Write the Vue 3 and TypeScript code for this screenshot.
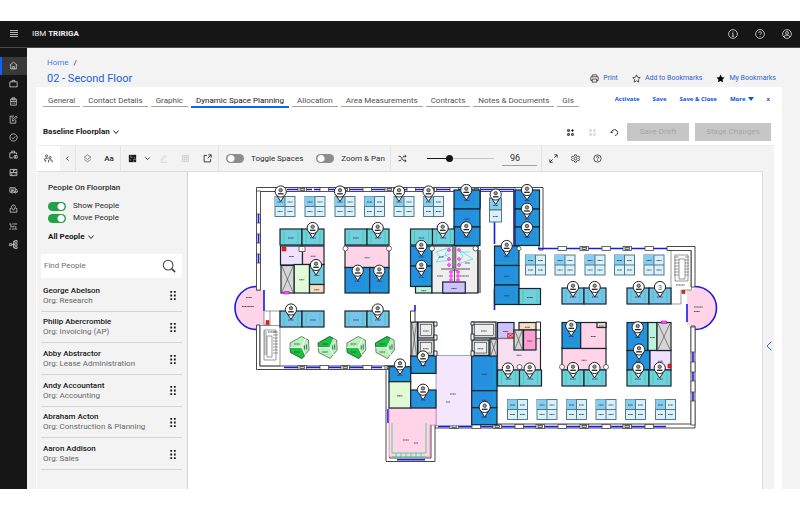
<script setup lang="ts">
import { ref } from 'vue'

interface NavItem { name: string; d: string }
interface Person { name: string; org: string }
interface Room { k: string; x: number; y: number; w: number; h: number }

const navItems: NavItem[] = [
  { name: 'Home', d: 'M1.5 7.5 8 2l6.5 5.5M3 6.5V14h10V6.5M6.5 14v-4h3v4' },
  { name: 'Portfolio', d: 'M1.5 5h13v9h-13zM5.5 5V2.5h5V5' },
  { name: 'Projects', d: 'M3 3.5h10V14.500H3zM5.5 1.5h5v3.5h-5zM3 8h10M5.5 11h1M8 11h2.5' },
  { name: 'Contracts', d: 'M9 2H2v12.5h10V9M6 10.5l.5-2.5 6-6 2 2-6 6zM4.5 5H7' },
  { name: 'Approvals', d: 'M8 1.5a6.5 6.5 0 1 0 .01 0M5 8l2.2 2.2L11.2 6' },
  { name: 'Facilities', d: 'M7 14H1.5V5h12v3M5 5V2h5v3M9 10h5.5v4.5H9zM11.5 10v4' },
  { name: 'Spaces', d: 'M2 2.5h12v11H2zM2 8h12M8 2.5V8M5 8v5.5M10 10.5h3M11.5 2.5l-2 3' },
  { name: 'Assets', d: 'M4 11H1.5V3h9.5v8H7M11 5.5h2l1.800 3V11H13M4 11a1.5 1.5 0 1 0 3 0 1.5 1.5 0 0 0-3 0M10 11a1.5 1.5 0 1 0 3 0 1.5 1.5 0 0 0-3 0M3.5 5.5H9M3.5 8H9' },
  { name: 'Locations', d: 'M8 11 5 7a3.5 3.5 0 1 1 6 0zM8 4.5v1M4 8H2v6.5h12V8h-2' },
  { name: 'Schedules', d: 'M2 2v3.5h3M6 3.5h8.5M2 8.5h7v-2M12 7v4M2 14V11M5 12.5h9.5' },
  { name: 'Hierarchy', d: 'M1 6.5h4v3.5H1zM5 8h3M8 2.5v11M8 2.5h2M8 13.5h2M8 8h2M10 1h4.5v3H10zM10 6.5h4.5v3H10zM10 12h4.5v3H10z' },
]

const tabs = ['General', 'Contact Details', 'Graphic', 'Dynamic Space Planning', 'Allocation', 'Area Measurements', 'Contracts', 'Notes & Documents', 'Gis']
const activeTab = ref('Dynamic Space Planning')

const people: Person[] = [
  { name: 'George Abelson', org: 'Research' },
  { name: 'Philip Abercrombie', org: 'Invoicing (AP)' },
  { name: 'Abby Abstractor', org: 'Lease Administration' },
  { name: 'Andy Accountant', org: 'Accounting' },
  { name: 'Abraham Acton', org: 'Construction & Planning' },
  { name: 'Aaron Addison', org: 'Sales' },
]

const showPeople = ref(true)
const movePeople = ref(true)
const toggleSpaces = ref(false)
const zoomPan = ref(false)
const search = ref('')
const zoomLevel = ref(31)
const zoomText = ref('96')

const r = (k: string, x: number, y: number, w: number, h: number): Room => ({ k, x, y, w, h })

// Offices that come in side-by-side pairs, 22 units each
const officePairs: [number, number, string][] = [
  [280, 229, 'cyan'], [345, 229, 'cyan'], [410.5, 229, 'cyan'], [280, 311, 'sky'], [345, 311, 'sky'],
  [562, 288, 'sky'], [627, 288, 'sky'], [562, 370, 'cyan'], [627, 370, 'cyan'], [497.5, 370, 'cyan'],
]
const offices: Room[] = officePairs.flatMap(([x, y, k]) => [r(k, x, y, 22, 16), r(k, x + 22, y, 22, 16)])
offices.push(r('cyan', 519, 288.5, 21.5, 16))

const rooms: Room[] = [
  r('lav', 280.5, 246, 22, 19), r('pink', 302.5, 246, 21.5, 18.5),
  r('lime', 294, 264.5, 15.5, 28.5), r('cyan', 309.5, 264.5, 14.5, 20), r('tan', 309.5, 284.5, 14.5, 8.5),
  r('pink', 345, 246, 44, 21.5), r('blue', 345, 267.5, 24.7, 25.5), r('blue', 369.7, 267.5, 19.3, 25.5),
  r('blue', 454, 190, 26, 19), r('blue', 454, 209, 26, 18), r('blue', 454, 227, 26, 18.5),
  r('blue', 410.5, 246, 21.5, 20), r('blue', 410.5, 266, 21.5, 20.5), r('mint', 415.5, 286.5, 16.5, 6.5),
  r('grey', 432, 246, 46, 47), r('violet', 442.7, 282, 22.6, 11),
  r('blue', 515, 190, 24.5, 19), r('blue', 515, 209, 24.5, 18), r('blue', 515, 227, 24.5, 18.5),
  r('blue', 494.5, 246, 24.5, 19.5), r('blue', 494.5, 265.5, 24.5, 19.5), r('blue', 494.5, 285, 24.5, 19.5),
  r('blue', 562, 322.5, 18.7, 26), r('pink', 580.7, 322.5, 25.3, 26), r('tan', 597, 322.5, 9, 5),
  r('blue', 627, 322.5, 21, 28), r('mint', 648, 322.5, 9, 28),
  r('pink', 562, 348.5, 44, 21.5), r('blue', 627, 350.5, 23, 19.5), r('lav', 650, 350.5, 21, 19.5),
  r('violet', 497.5, 322.5, 16.5, 16), r('lilac', 497.5, 338.5, 43, 31.5),
  r('tan', 519, 322.5, 17, 7.5), r('rose', 523.5, 330, 12.5, 20),
  r('blue', 410.7, 355.7, 25.3, 17.7), r('blue', 389, 366.7, 21.7, 15),
  r('lime', 389, 381.7, 21.7, 26.3), r('blue', 410.7, 390, 25.3, 18),
  r('blue', 471.7, 355.7, 25.3, 35), r('blue', 471.7, 390.7, 25.3, 17), r('blue', 471.7, 407.7, 25.3, 17),
]

// Elevators and service shafts, drawn with a crossing
const shafts: Room[] = [
  r('shaft', 281, 265.5, 13, 27.5), r('shaft', 657, 322.5, 14, 28), r('shaft', 411, 322, 6.5, 34),
  r('shaft', 490, 339, 7.3, 17), r('shaft', 514, 330, 9, 20),
]
const lifts: Room[] = [
  r('shaft', 418, 322, 16, 16), r('shaft', 418, 340, 16, 15.5),
  r('shaft', 472, 322, 24, 16), r('shaft', 472, 340, 17, 15.5),
]

const desks: [number, number][] = [
  ...[275, 305, 335, 364.5, 394, 423.5].map((x): [number, number] => [x, 196.5]),
  ...[525.5, 555, 585, 614.5, 644].map((x): [number, number] => [x, 255]),
  ...[507.5, 537, 566.5, 596, 625.5, 655.5].map((x): [number, number] => [x, 399.5]),
]

const pins: [number, number][] = [
  [280.7, 191.5], [340, 191.5], [399, 191.5], [428.5, 191.5], [466.3, 190], [495.7, 194.5], [527, 190],
  [527, 208.7], [527, 227.3], [466.3, 227.3], [312.7, 228], [377.7, 228], [442.7, 228],
  [421.3, 246], [421.3, 266], [506.7, 246], [316, 265], [357.7, 270.7], [379.3, 270.7],
  [291, 309.5], [377.7, 309.5], [573, 287], [594.7, 287], [638.7, 287], [571.3, 326], [637.7, 327.3],
  [639, 349.5], [573, 368], [594.5, 368], [638.3, 368], [659.7, 368], [423, 356.5], [400, 364.5],
  [423, 389.7], [484.7, 407], [508, 368.5], [529.7, 368.5],
]

const pods: { x: number; up: boolean }[] = [
  { x: 299.5, up: false }, { x: 327.7, up: true }, { x: 356.3, up: false }, { x: 385, up: true },
]

const windowsH: [number, number][] = [
  ...[298, 320, 341, 363, 385, 407, 428, 450, 472, 515].map((x): [number, number] => [x, 187.5]),
  ...[298, 320, 341, 363, 385].map((x): [number, number] => [x, 365.5]),
  ...[558, 580, 602, 623, 645].map((x): [number, number] => [x, 246.5]),
  ...[450, 472, 493, 515, 536, 558, 580, 602, 623, 645].map((x): [number, number] => [x, 424.5]),
]
const windowsV: [number, number, number][] = [
  [256.5, 191, 23], [256.5, 223, 11], [256.5, 243, 11], [256.5, 263, 27],
  [691, 327, 25], [691, 362, 10], [691, 381, 11], [691, 401, 24],
]
</script>

<template>
  <div class="app">
    <header class="topbar">
      <button class="menu" aria-label="Open menu">
        <svg width="10" height="10" viewBox="0 0 10 10"><path d="M1 1.500h8M1 3.500h8M1 5.500h8M1 7.500h8" stroke="#b5b5b5" /></svg>
      </button>
      <p class="brand">IBM <b>TRIRIGA</b></p>
      <div class="top-actions">
        <button aria-label="Information">
          <svg class="line" viewBox="0 0 16 16"><circle cx="8" cy="8" r="7" /><path d="M6.5 7H8v4.5M6 11.5h4M8 4v1.5" /></svg>
        </button>
        <button aria-label="Help">
          <svg class="line" viewBox="0 0 16 16"><circle cx="8" cy="8" r="7" /><path d="M5.8 6.2a2.2 2 0 1 1 3 1.9q-.8.3-.8 1.4M8 11v1.3" /></svg>
        </button>
        <button aria-label="Account">
          <svg class="line" viewBox="0 0 16 16"><circle cx="8" cy="8" r="7" /><circle cx="8" cy="6.3" r="2.3" /><path d="M4 13v-1.5Q4 10 6 10h4q2 0 2 1.5V13" /></svg>
        </button>
      </div>
    </header>

    <div class="shell">
      <nav class="rail" aria-label="Main">
        <ul>
          <li v-for="(item, i) in navItems" :key="item.name" :class="{ on: i === 0 }">
            <a href="#" :aria-label="item.name"><svg class="line" viewBox="0 0 16 16"><path :d="item.d" /></svg></a>
          </li>
        </ul>
      </nav>

      <main class="main">
        <div class="heading">
          <div>
            <p class="crumbs"><a href="#">Home</a><span>/</span></p>
            <h1>02 - Second Floor</h1>
          </div>
          <div class="links">
            <a href="#"><svg class="line dark" viewBox="0 0 16 16"><path d="M4 5V1.5h8V5M4 11.5H1.5V5h13v6.5H12M4 9h8v5.5H4z" /></svg>Print</a>
            <a href="#"><svg class="line dark" viewBox="0 0 16 16"><path d="m8 1.5 2 4.3 4.7.6-3.4 3.3.8 4.7L8 12.1l-4.1 2.3.8-4.7L1.3 6.4 6 5.8z" /></svg>Add to Bookmarks</a>
            <a href="#"><svg viewBox="0 0 16 16"><path d="m8 1 2.200 4.600 5 .7-3.600 3.500.9 5L8 12.400l-4.500 2.400.9-5L.8 6.300l5-.7z" /></svg>My Bookmarks</a>
          </div>
        </div>

        <section class="card">
          <div class="tabrow">
            <nav class="tabs" aria-label="Record sections">
              <a v-for="t in tabs" :key="t" href="#" :class="{ on: t === activeTab }" @click.prevent="activeTab = t">{{ t }}</a>
            </nav>
            <div class="record-actions">
              <button>Activate</button>
              <button>Save</button>
              <button>Save &amp; Close</button>
              <button class="more">More<svg width="6" height="4" viewBox="0 0 6 4"><path d="M0 0h6L3 4z" fill="#0f52d9" /></svg></button>
              <button aria-label="Close">x</button>
            </div>
          </div>

          <div class="planrow">
            <label class="pick">
              <select aria-label="Floorplan"><option>Baseline Floorplan</option></select>
              <svg viewBox="0 0 8 8"><path d="m1.500 2.500 2.500 3 2.500-3" /></svg>
            </label>
            <div class="plan-actions">
              <button class="ib" aria-label="Compare plans"><svg class="line dark" viewBox="0 0 16 16"><path d="M3 3h3v3H3zM3 10h3v3H3zM10 10h3v3h-3zM11.500 2v5M9 4.500h5" stroke-width="1.7" /></svg></button>
              <button class="ib" aria-label="Merge plans" disabled><svg class="line faint" viewBox="0 0 16 16"><path d="M3 3h3v3H3zM3 10h3v3H3zM10 10h3v3h-3zM11.500 2v5M9 4.500h5" stroke-width="1.5" /></svg></button>
              <button class="ib" aria-label="Undo"><svg class="line dark" viewBox="0 0 16 16"><path d="M2.500 8.500a5.500 5.500 0 1 1 8.500 4.500H9M.5 6.500l2.200 2.500L5 6.500" stroke-width="1.6" /></svg></button>
              <button class="solid draft" disabled>Save Draft</button>
              <button class="solid stage" disabled>Stage Changes</button>
            </div>
          </div>

          <div class="tools">
            <div class="group">
              <button class="ib white" aria-label="People"><svg class="line dark" viewBox="0 0 16 16"><circle cx="4.500" cy="3.300" r="1.800" /><path d="M1 12V9.500q0-2 2-2h3q1.500 0 2 1.500M3 10v4" /><circle cx="11" cy="6.300" r="1.800" /><path d="M8 15v-3q0-1.500 1.500-1.500h3.500q1.500 0 1.500 1.500v3" /></svg></button>
              <button class="ib slim" aria-label="Collapse panel"><svg class="line dark" viewBox="0 0 16 16"><path d="M10 3.500 5.500 8l4.500 4.500" stroke-width="2" /></svg></button>
            </div>
            <div class="group">
              <button class="ib" aria-label="Layers"><svg class="line soft" viewBox="0 0 16 16"><path d="m8 1.500 6 4-6 4-6-4zM2 9.500l6 4.500 6-4.500" /></svg></button>
              <button class="ib letters" aria-label="Labels">Aa</button>
            </div>
            <div class="group">
              <button class="ib" aria-label="Theme"><svg viewBox="0 0 16 16"><path d="M1.500 1.500h13v13h-13z" fill="#161616" /><path d="M5 2v4h3M9 10h5M10 14v-2.500M11.500 5v3M4 9v3" stroke="#d0d0d0" fill="none" /></svg></button>
              <button class="ib slim" aria-label="Theme options"><svg class="line dark" viewBox="0 0 16 16"><path d="m3 5.500 5 5 5-5" stroke-width="2" /></svg></button>
              <button class="ib" aria-label="Edit" disabled><svg class="line faint" viewBox="0 0 16 16"><path d="M1.500 14.500h13M4 11.500l.5-3 6-6 2 2-6 6z" /></svg></button>
              <button class="ib" aria-label="Table" disabled><svg class="line faint" viewBox="0 0 16 16"><path d="M2.500 2.500h11v11h-11zM2.500 6h11M2.500 10h11M6 2.500v11M10 2.500v11" /></svg></button>
              <button class="ib" aria-label="Open in new window"><svg class="line dark" viewBox="0 0 16 16"><path d="M7 2.500H2v11.500h11.500V9M9.500 1.500h5v5M14.500 1.500 8.500 7.500" stroke-width="1.5" /></svg></button>
            </div>
            <div class="group switches">
              <label><input v-model="toggleSpaces" class="switch" type="checkbox" />Toggle Spaces</label>
              <label><input v-model="zoomPan" class="switch" type="checkbox" />Zoom &amp; Pan</label>
            </div>
            <div class="group zoomer">
              <button class="ib" aria-label="Shuffle"><svg class="line dark" viewBox="0 0 16 16"><path d="M1 4h3l6 8h4M1 12h3l2-2.500M8.500 6.500 10 4h4M12 2l2.500 2L12 6M12 10l2.500 2-2.500 2" stroke-width="1.5" /></svg></button>
              <input v-model="zoomLevel" class="range" type="range" min="0" max="100" aria-label="Zoom" />
              <input v-model="zoomText" class="pct" type="text" aria-label="Zoom percent" />
            </div>
            <div class="group">
              <button class="ib" aria-label="Fit to screen"><svg class="line dark" viewBox="0 0 16 16"><path d="M9.500 1.500h5v5M14.500 1.500 9.500 6.500M6.500 14.500h-5v-5M1.500 14.500l5-5" stroke-width="1.5" /></svg></button>
              <button class="ib" aria-label="Settings"><svg class="line dark" viewBox="0 0 16 16"><path d="M6.500 1.500h3l.5 2 2 1 2-.5 1.300 2.500L14 8l1.300 1.500L14 12l-2-.5-2 1-.5 2h-3l-.5-2-2-1L2 12 .7 9.500 2 8 .7 6.500 2 4l2 .5 2-1z" /><circle cx="8" cy="8" r="2.500" /></svg></button>
              <button class="ib" aria-label="Help"><svg class="line dark" viewBox="0 0 16 16"><circle cx="8" cy="8" r="6.500" /><path d="M6 6.300a2 1.800 0 1 1 2.800 1.700Q8 8.300 8 9.500M8 11v1.300" stroke-width="1.5" /></svg></button>
            </div>
          </div>

          <div class="work">
            <aside class="panel">
              <div class="settings">
                <h2>People On Floorplan</h2>
                <label><input v-model="showPeople" class="switch" type="checkbox" />Show People</label>
                <label><input v-model="movePeople" class="switch" type="checkbox" />Move People</label>
                <span class="pick group-pick">
                  <select aria-label="People filter"><option>All People</option></select>
                  <svg viewBox="0 0 8 8"><path d="m1.500 2.500 2.500 3 2.500-3" /></svg>
                </span>
              </div>
              <label class="search">
                <input v-model="search" type="search" placeholder="Find People" aria-label="Find People" />
                <svg viewBox="0 0 16 16"><circle cx="7" cy="7" r="5.500" /><path d="m11 11 4 4" stroke-width="1.8" /></svg>
              </label>
              <ul class="people">
                <li v-for="p in people" :key="p.name">
                  <div>
                    <h3>{{ p.name }}</h3>
                    <p>Org: {{ p.org }}</p>
                  </div>
                  <svg class="grip" viewBox="0 0 6 10"><path d="M0 0h2v2H0zM4 0h2v2H4zM0 4h2v2H0zM4 4h2v2H4zM0 8h2v2H0zM4 8h2v2H4z" /></svg>
                </li>
              </ul>
            </aside>

            <svg class="plan-svg" viewBox="188 172 574 317" role="img" aria-label="Second floor plan">
              <defs>
                <g id="pin">
                  <path d="M-4 3.800 0 10l4-6.200" fill="#fff" stroke="#222" />
                  <circle r="5.600" fill="#fff" stroke="#222" />
                  <circle cy="-1.300" r="1.700" fill="#999" stroke="#333" stroke-width=".8" />
                  <path d="M-2.800 2.300h5.600" stroke="#222" stroke-width="1.300" />
                </g>
              </defs>

              <!-- curved end bays -->
              <path class="pink" d="M257 286.500a21.500 21.500 0 0 0 0 43l3-4h4V290h-4z" />
              <path class="glass" d="M256.500 286.500a21.500 21.500 0 0 0 0 43M264 290v21" />
              <path class="pink" d="M695 286.500a21.500 21.500 0 0 1 0 43l-2-4h-6V290h6z" />
              <path class="glass" d="M695 286.500a21.500 21.500 0 0 1 0 43M687 304v18" />

              <!-- outer walls -->
              <path class="wall" d="M256.500 290V187.500H543V250h-4v-58.500H260.500V290z" />
              <path class="wall" d="M256.500 325h3.500v41h129v3.500H256.500z" />
              <path class="wall" d="M667 246.500h28V287h-4v-36.500h-24z" />
              <path class="wall" d="M691 326h4v102H435v-4h256z" />
              <path class="wall" d="M386 366.500h3.500V458h41.500V424h4v37.500h-49z" />
              <path class="glass" d="M287 189.500h25M314 189.500h200M538 248.500h129M284 367.500h98M438 426.500h228M258.500 214v50M693 352v50M397 459.800h28M388 409v14M494.500 289v21M415 305v6M494.500 193v51" />
              <path class="glass" d="M480 190v18M514 190v56" stroke-width=".8" />

              <g v-for="([x, y], i) in windowsH" :key="'h' + i">
                <rect class="sill" :x="x" :y="y" width="8.500" height="4" />
                <rect v-if="i % 2 === 0" class="sill inner" :x="x + 2" :y="y + 1" width="4.500" height="2" />
              </g>
              <rect v-for="([x, y, h], i) in windowsV" :key="'v' + i" class="sill" :x="x" :y="y" width="4" :height="h" />

              <!-- stairwells -->
              <g class="stairs">
                <path d="M259.500 325.500H280V366h-20.500zM264 330h12v30h-12zM267 336h5v21h-5z" />
                <path d="M264 332h3M264 334h3M264 336h3M264 338h3M264 340h3M264 342h3M264 344h3M264 346h3M264 348h3M264 350h3M264 352h3M264 354h3M273 332h5M273 335h5M273 338h5M273 341h5M273 344h5M273 347h5M273 350h5M273 353h5" />
                <path d="M671 250.500h20.500V290H681v14h-10zM675 255h13v26h-13zM679 259h6v20h-6z" />
                <path d="M674 257h5M674 260h5M674 263h5M674 266h5M674 269h5M674 272h5M674 275h5M685 257h4M685 260h4M685 263h4M685 266h4M685 269h4M685 272h4M685 275h4" />
                <path d="M265 311h15v15M264 311v14h6v-14" />
              </g>

              <!-- lobby and entrance hall -->
              <rect x="436" y="355.700" width="35.500" height="70" fill="#f4e6fd" stroke="#5b6fc4" stroke-width=".6" />
              <path d="M389 408h47v17h-6v32h-41z" class="pink" stroke="#e66aa8" stroke-width=".7" />
              <path d="M392 423v30h34v-30M392 457h34M396 453v4M401 453v4M406 453v4M411 453v4M416 453v4M421 453v4" class="green-line" />
              <path d="M403 440h6M414 443h4M450 394h6M446 402h4" class="mark" />

              <rect v-for="(o, i) in rooms" :key="'r' + i" class="room" :class="o.k" :x="o.x" :y="o.y" :width="o.w" :height="o.h" />
              <g v-for="(o, i) in offices" :key="'o' + i">
                <rect class="room" :class="o.k" :x="o.x" :y="o.y" :width="o.w" :height="o.h" />
                <path class="green-line" :d="`M${o.x + 4} ${o.y + 2}v12M${o.x + 18} ${o.y + 2}v12`" />
                <path :d="`M${o.x + 8} ${o.y + 9}h6`" class="mark" />
              </g>
              <g v-for="(o, i) in rooms" :key="'g' + i">
                <path v-if="o.k === 'blue'" class="teal-line" :d="`M${o.x + 3} ${o.y + o.h - 3}h${o.w - 6}v-${o.h - 6}`" />
                <path class="mark" :d="`M${o.x + o.w / 2 - 2.5} ${o.y + o.h / 2 + 1}h5`" />
              </g>
              <g v-for="(o, i) in shafts" :key="'s' + i">
                <rect class="room shaft" :x="o.x" :y="o.y" :width="o.w" :height="o.h" />
                <path class="cross" :d="`M${o.x + 1} ${o.y + 1}l${o.w - 2} ${o.h - 2}m0 ${2 - o.h}l${2 - o.w} ${o.h - 2}`" />
              </g>
              <g v-for="(o, i) in lifts" :key="'l' + i">
                <rect class="room shaft" :x="o.x" :y="o.y" :width="o.w" :height="o.h" />
                <rect :x="o.x + 2.5" :y="o.y + 2.5" :width="o.w - 5" :height="o.h - 5" fill="#eee" stroke="#333" stroke-width=".6" />
                <path class="mark" :d="`M${o.x + o.w / 2 - 3} ${o.y + o.h / 2 + 1}h6`" />
              </g>
              <path class="heavy" d="M434 322h3v4h-3zM434 335h3v5h-3zM434 351h3v5h-3zM471 322h3v3h-3zM471 334h3v6h-3zM471 351h3v5h-3zM410.500 311h4.500v11h-4.500z" />

              <!-- wash rooms -->
              <path d="M436 252l15-5-6 7 6 6-15 2 4-5zM458 249l15 10-15 5 5-8zM460 252h10M438 258l12-4" fill="none" stroke="#35e0e0" stroke-width=".7" />
              <rect x="452.500" y="246" width="3.500" height="22" fill="#888" stroke="#222" stroke-width=".4" />
              <path d="M441 269h29M454.500 269v13" stroke="#444" stroke-width=".9" />
              <g fill="#fbe" stroke="#f0f" stroke-width=".9">
                <circle cx="449" cy="250" r="1.300" /><circle cx="449" cy="259" r="1.300" /><circle cx="449" cy="265" r="1.300" />
                <circle cx="459" cy="250" r="1.300" /><circle cx="459" cy="259" r="1.300" /><circle cx="459" cy="265" r="1.300" />
                <circle cx="451" cy="272" r="1.300" /><circle cx="451" cy="276" r="1.300" /><circle cx="451" cy="280" r="1.300" />
                <circle cx="458" cy="272" r="1.300" /><circle cx="458" cy="276" r="1.300" /><circle cx="458" cy="280" r="1.300" />
              </g>
              <path d="M437 276h6M460 276h9M439 257h5M465 263h5M676 285h9M268 332h8M246 297.500h6M242 306.500h12M694 307h9M694 311.500h6" class="mark" />
              <g fill="#fff" stroke="#333" stroke-width=".7">
                <circle cx="345.500" cy="248.500" r="2.500" /><circle cx="389" cy="248.500" r="2.500" /><circle cx="432" cy="248.500" r="2.500" />
                <circle cx="475.500" cy="248.500" r="2.500" /><circle cx="519" cy="248.500" r="2" /><circle cx="562" cy="367" r="2.500" />
                <circle cx="606" cy="367" r="2.500" /><circle cx="519.500" cy="367" r="2.500" />
              </g>
              <g fill="#e22" stroke="#a00" stroke-width=".5">
                <path d="M282 247h4v4h-4zM266 320.500h3v4h-3zM682 290.500h3v3h-3zM668 364h3v4h-3z" />
                <path d="M507.500 333.500h6v4h-6z" fill="#f99" /><path d="m507.500 333.500 6 4m0-4-6 4" />
              </g>
              <path d="M299 246.500h6v5h-6zM302 249h.5" class="sill" />
              <path d="M284 291.500h5v2.500h-5zM661.500 321h5v2.500h-5z" fill="#f5f" stroke="#b0b" stroke-width=".6" />
              <path d="M536 330h4.500v40M540.500 330v-8h-4.500M478 250v43M480 250v43" fill="none" stroke="#222" />

              <!-- open desks -->
              <g v-for="([x, y], i) in desks" :key="'d' + i">
                <rect :x="x" :y="y" width="20" height="20" fill="#d9f1fb" stroke="#456b7c" stroke-width=".9" />
                <rect :x="x" :y="y" width="10" height="10" fill="#86cdf0" />
                <path :d="`M${x + 10} ${y}v20M${x} ${y + 10}h20`" stroke="#456b7c" stroke-width=".9" />
                <path class="mark" :d="`M${x + 2.5} ${y + 5.5}h5m5 0h5M${x + 2.5} ${y + 15}h5m5 0h5`" />
              </g>
              <rect x="489.500" y="198" width="12" height="12" fill="#86cdf0" stroke="#456b7c" stroke-width=".9" />
              <rect x="489.500" y="210" width="12" height="12" fill="#d9f1fb" stroke="#456b7c" stroke-width=".9" />
              <path class="mark" d="M493 205.500h5M493 216.500h5" />

              <!-- hexagonal pods -->
              <g v-for="p in pods" :key="p.x" :transform="`translate(${p.x} 347.5)`" stroke="#333" stroke-width=".6">
                <path d="M-9.500-4.500 2-11l7 3.500.5 10L2.500 11-9 5z" fill="#b6f2ba" />
                <path v-if="p.up" d="M-9.500-1v-3.500L2-11l4 2L2 0z" fill="#15c63b" />
                <path v-else d="M-9.500 0H2l3 8.500L2.500 11-9 5z" fill="#15c63b" />
                <path d="M-9.500 0H2L6-9M2 0l4 8" fill="none" stroke="#fff" stroke-width="1" />
                <path class="mark" d="M-5.500-3.500H0M-5.500 4.500H0M5-2v4M7-3v5" />
              </g>

              <use v-for="([x, y], i) in pins" :key="'p' + i" href="#pin" :x="x" :y="y" />
              <g>
                <path d="M656 290.800 660 297l4-6.200" fill="#fff" stroke="#222" />
                <circle cx="660" cy="287" r="5.600" fill="#fff" stroke="#222" />
                <text x="660" y="290" text-anchor="middle" class="count">3</text>
              </g>
            </svg>

            <div class="gutter">
              <button aria-label="Open details"><svg viewBox="0 0 6 10"><path d="M5.500.5 1 5l4.500 4.500" /></svg></button>
            </div>
          </div>
        </section>
      </main>
    </div>
  </div>
</template>

<style>
body {
  margin: 0;
  background: #fff;
}
</style>

<style scoped>
.app {
  padding: 21px 0 42px;
  font-family: Roboto, "Liberation Sans", sans-serif;
  font-size: 8px;
  line-height: 10px;
  color: #2b2b2b;
}
h1, h2, h3, p, ul { margin: 0; padding: 0; }
ul { list-style: none; }
a { text-decoration: none; color: #2a63c9; }
button, input, select {
  margin: 0;
  padding: 0;
  border: 0;
  background: none;
  font: inherit;
  color: inherit;
  outline: none;
}
svg { display: block; }
.line { fill: none; stroke: #dedede; stroke-width: 1.3; }
.line.dark { stroke: #222; }
.line.soft { stroke: #666; }
.line.faint { stroke: #ccc; }

.topbar {
  display: flex;
  align-items: center;
  height: 26px;
  background: #161616;
  border-bottom: 1px solid #4a4a4a;
  color: #f0f0f0;
}
.menu { width: 27px; display: flex; justify-content: center; }
.brand { padding-left: 5px; }
.top-actions { display: flex; gap: 17px; margin-left: auto; padding-right: 8px; }
.top-actions svg { width: 10px; height: 10px; }

.shell { display: flex; }
.rail { width: 27px; flex: none; background: #161616; }
.rail ul { display: grid; grid-auto-rows: 1fr; height: 196px; padding-top: 9px; }
.rail li { display: flex; align-items: center; justify-content: center; }
.rail li.on { background: #393939; box-shadow: inset 2px 0 #1062fe; }
.rail svg { width: 9px; height: 9px; }

.main {
  flex: 1;
  min-width: 0;
  padding: 0 18px 0 9px;
  background: #f3f3f3;
}
.heading {
  display: flex;
  justify-content: space-between;
  align-items: flex-end;
  height: 39px;
  padding: 0 6px 0 11px;
}
.crumbs a { color: #3f7ce8; }
.crumbs span { padding-left: 5px; }
h1 {
  padding: 4px 0 1px;
  font-size: 11px;
  line-height: 14px;
  font-weight: 400;
  color: #1d5fd6;
}
.links { display: flex; gap: 14px; padding-bottom: 4px; font-size: 7px; }
.links a { display: flex; align-items: center; gap: 4px; }
.links svg { width: 9px; height: 9px; }

.card { padding: 0 8px 0 1px; background: #fff; }
.tabrow { display: flex; justify-content: space-between; align-items: flex-start; padding: 8px 4px 0 6px; }
.tabs { display: flex; gap: 3px; }
.tabs a {
  padding: 0 5px;
  border-bottom: 1px solid #a2a2a2;
  color: #525252;
  white-space: nowrap;
  line-height: 11px;
}
.tabs a.on { border-bottom: 2px solid #1062fe; color: #161616; margin-bottom: -1px; }
.record-actions {
  display: flex;
  gap: 13px;
  font: bold 6px/8px "Open Sans", sans-serif;
  color: #0f52d9;
}
.more { display: flex; align-items: center; gap: 2px; }

.planrow {
  display: flex;
  align-items: center;
  justify-content: space-between;
  padding: 16px 3px 4px 6px;
}
.pick { display: inline-flex; align-items: center; gap: 2px; font-weight: 700; color: #161616; }
.pick select { appearance: none; }
.pick svg { width: 8px; height: 8px; fill: none; stroke: #222; }
.plan-actions { display: flex; align-items: center; }
.solid {
  height: 18px;
  margin-left: 6px;
  background: #c6c6c6;
  color: #a6a6a6;
}
.solid.draft { width: 62px; margin-left: 2px; }
.solid.stage { width: 76px; }

.ib { display: flex; align-items: center; justify-content: center; width: 22px; height: 100%; }
.ib svg { width: 9px; height: 9px; }
.ib.white { background: #fff; width: 23px; }
.ib.slim { flex: 1; }
.ib.slim svg { width: 7px; height: 7px; }
.letters { font-weight: 500; }

.tools {
  display: flex;
  height: 25px;
  background: #f3f3f3;
  border-top: 1px solid #ececec;
}
.group { display: flex; align-items: center; border-right: 1px solid #e2e2e2; }
.group:nth-child(1) { width: 38px; }
.group:nth-child(3) { width: 97px; }
.group:last-child { border: 0; }
.switches { width: 171px; gap: 13px; }
.switches label { display: flex; align-items: center; gap: 7px; white-space: nowrap; }
.switches label:first-child { padding-left: 7px; }
.zoomer { width: 150px; }
.range { appearance: none; width: 67px; height: 8px; margin-left: 14px; background: linear-gradient(90deg, #161616 33%, #c6c6c6 33%) center / 100% 1px no-repeat; }
.range::-webkit-slider-thumb { appearance: none; width: 7px; height: 7px; border-radius: 50%; background: #161616; }
.pct {
  width: 35px;
  height: 14px;
  margin-left: 8px;
  padding-left: 8px;
  box-sizing: border-box;
  border-bottom: 1px solid #a0a0a0;
  font-size: 9px;
}
.switch {
  appearance: none;
  flex: none;
  width: 18px;
  height: 9px;
  border-radius: 5px;
  background: radial-gradient(circle at 5px 50%, #fff 3px, transparent 4px), #8d8d8d;
}
.switch:checked { background: radial-gradient(circle at 13px 50%, #fff 3px, transparent 4px), #24a148; }

.work { display: flex; align-items: stretch; }
.panel {
  width: 150px;
  flex: none;
  background: #f3f3f3;
  border-top: 1px solid #dcdcdc;
  border-right: 1px solid #d2d2d2;
  box-sizing: content-box;
}
.settings { display: flex; flex-direction: column; padding: 11px 11px 0; }
.settings h2 { font-size: 8px; line-height: 10px; font-weight: 500; padding-bottom: 7px; }
.settings label { display: flex; align-items: center; gap: 7px; height: 12px; }
.group-pick { padding: 8px 0 12px; }
.search {
  display: flex;
  align-items: center;
  justify-content: space-between;
  height: 24px;
  margin: 0 5px 0 4px;
  padding: 0 6px 0 3px;
  background: #fff;
}
.search input { flex: 1; min-width: 0; appearance: none; }
.search input::placeholder { color: #707070; opacity: 1; }
.search svg { width: 14px; height: 14px; fill: none; stroke: #444; stroke-width: 1.2; }
.people { display: grid; grid-auto-rows: 1fr; height: 190px; margin: 2px 5px 0 4px; }
.people li {
  display: flex;
  align-items: center;
  justify-content: space-between;
  padding: 1px 6px 0 2px;
  border-bottom: 1px solid #d4d4d4;
}
.people h3 { font-size: 8px; line-height: 10px; font-weight: 500; color: #161616; }
.people p { color: #666; }
.grip { width: 6px; height: 9px; fill: #161616; }

.plan-svg { flex: 1; min-width: 0; height: auto; background: #fff; border-top: 1px solid #dcdcdc; }
.gutter {
  display: flex;
  align-items: center;
  justify-content: center;
  width: 11px;
  background: #f3f3f3;
  border-left: 1px solid #dcdcdc;
}
.gutter button { padding: 32px 0 0 1px; }
.gutter svg { width: 6px; height: 10px; fill: none; stroke: #2f6be0; }

.room { stroke: #16262e; stroke-width: 1.2; }
.cyan { fill: #72cfe0; }
.sky { fill: #78c2ee; }
.blue { fill: #258fe0; }
.pink { fill: #ffd3e8; }
.rose { fill: #ff9fd0; }
.lav { fill: #efe0fd; }
.lilac { fill: #f8dff0; stroke: #8b6b84; }
.violet { fill: #cfc2fa; }
.lime { fill: #e2fbd6; }
.mint { fill: #bdf3dc; }
.tan { fill: #f7dcc0; }
.grey { fill: #eeeeee; }
.shaft { fill: #d6d6d6; }
.cross { stroke: #444; stroke-width: 0.6; fill: none; }
.wall { fill: #fff; stroke: #333; stroke-width: 0.9; }
.sill { fill: #fff; stroke: #444; stroke-width: 0.8; }
.inner { fill: #ccc; }
.heavy { fill: #fff; stroke: #222; stroke-width: 0.9; }
.glass { fill: none; stroke: #1a1ae6; stroke-width: 1.6; }
.stairs path { fill: none; stroke: #555; stroke-width: 0.6; }
.green-line { fill: none; stroke: #35d68c; stroke-width: 0.9; }
.teal-line { fill: none; stroke: #17b3a5; stroke-width: 0.7; }
.mark { fill: none; stroke: #234; stroke-width: 1.1; stroke-dasharray: 1.2 0.3; opacity: 0.8; }
.count { font-size: 7px; fill: #555; }
</style>
